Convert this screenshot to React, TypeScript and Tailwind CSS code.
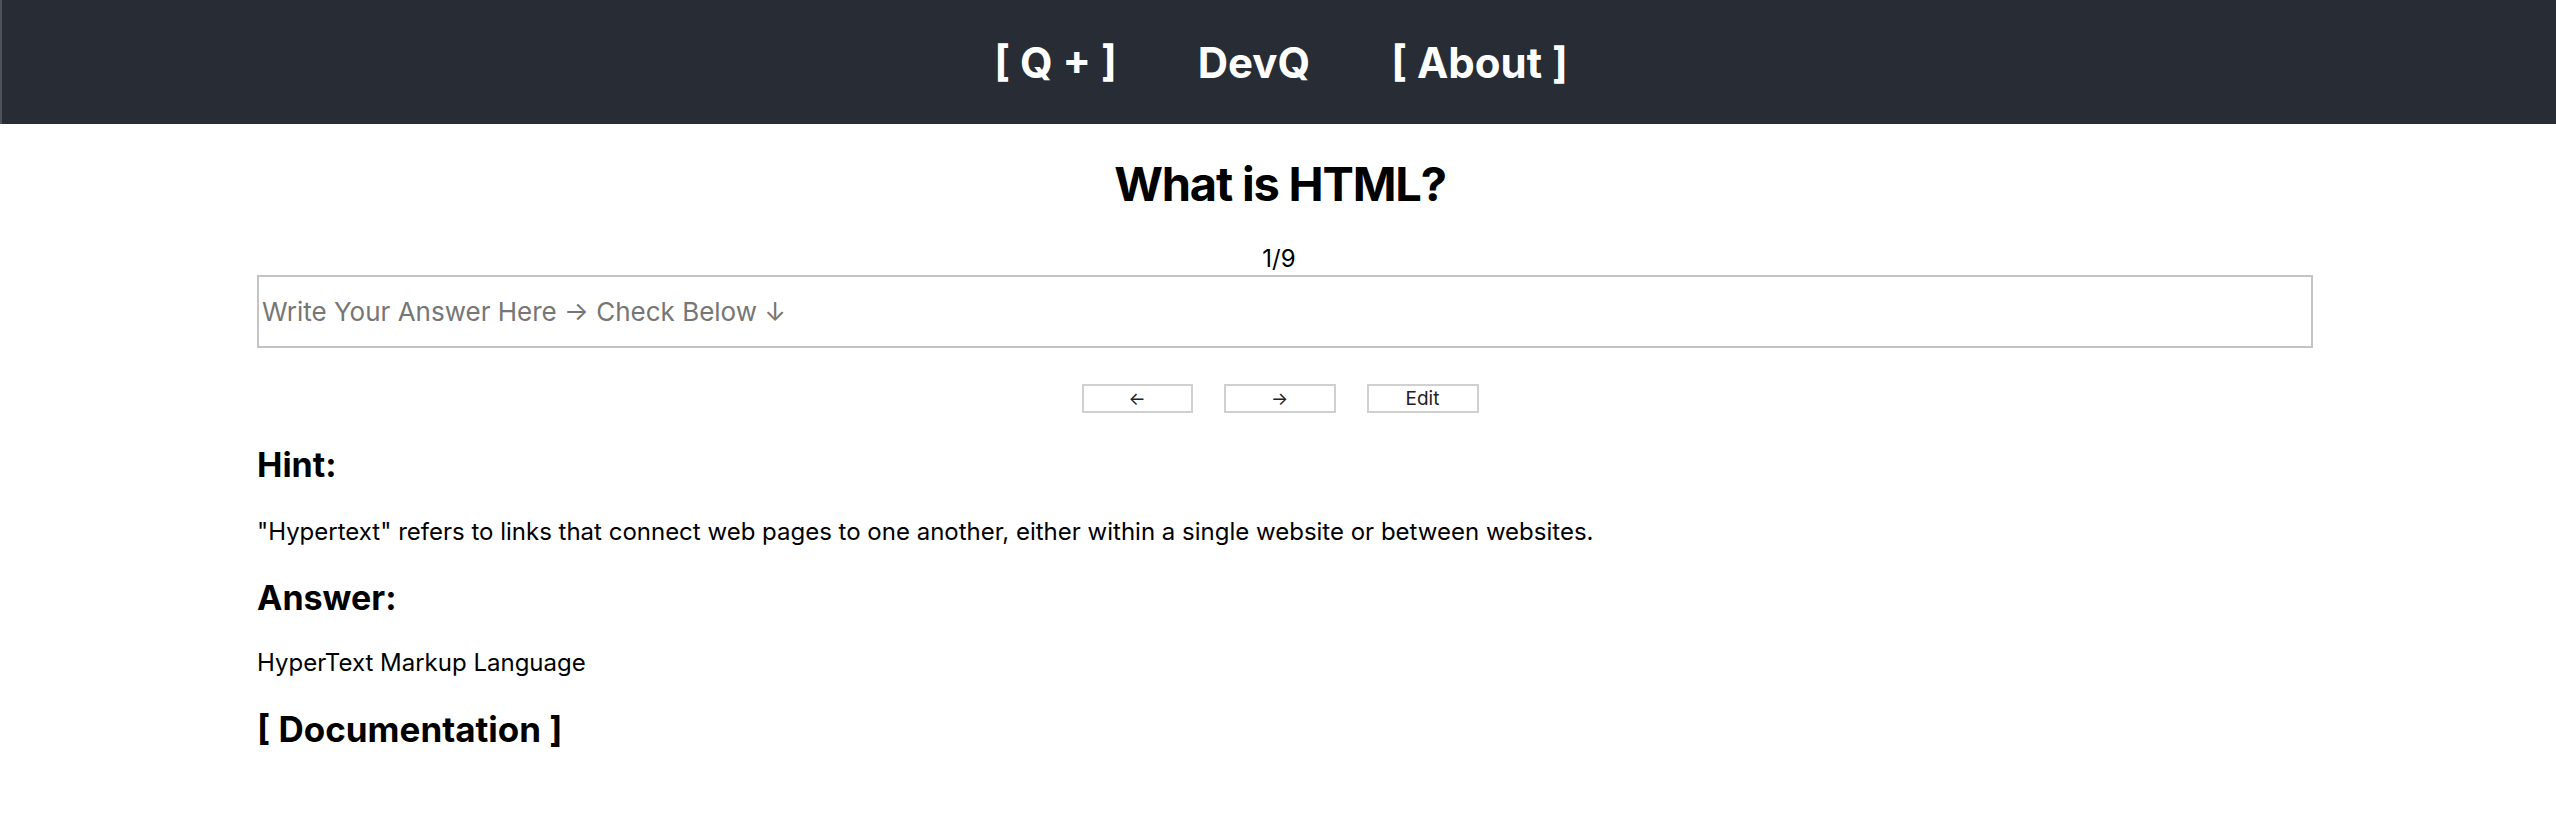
import React, { useState } from 'react'

const questions = [
  {
    q: 'What is HTML?',
    hint: '"Hypertext" refers to links that connect web pages to one another, either within a single website or between websites.',
    answer: 'HyperText Markup Language',
  },
]

export default function App() {
  const [index] = useState(0)
  const [value, setValue] = useState('')
  const item = questions[index]

  return (
    <div className="min-h-screen bg-white text-black font-['Inter',sans-serif]">
      <header className="h-[124px] bg-[#282c34] border-l-2 border-[#4e525a] pt-[42px]">
        <nav className="flex justify-center gap-[81px] pl-[4px] text-[42px] leading-none font-bold text-white">
          <a>[ Q + ]</a>
          <a>DevQ</a>
          <a>[ About ]</a>
        </nav>
      </header>

      <main className="flex flex-col">
        <h1 className="mt-[36px] pl-[4px] text-center text-[47px] leading-none font-bold tracking-[-0.025em]">
          {item.q}
        </h1>
        <div className="mt-[40px] pl-[2px] text-center text-[24px] leading-none">
          {index + 1}/9
        </div>

        <div className="mt-[4px] pl-[257px]">
          <input
            value={value}
            onChange={e => setValue(e.target.value)}
            placeholder="Write Your Answer Here → Check Below ↓"
            className="block w-[2056px] h-[73px] border-2 border-[#c4c4c4] px-[3px] text-[26px] text-black placeholder:text-[#767676] outline-none"
          />
        </div>

        <div className="mt-[36px] flex justify-center gap-[31px] pl-[4px]">
          <button className="w-[111px] h-[29px] border-2 border-[#d0d0d0] bg-white text-[18px] leading-none text-[#222]">
            ←
          </button>
          <button className="w-[112px] h-[29px] border-2 border-[#d0d0d0] bg-white text-[18px] leading-none text-[#222]">
            →
          </button>
          <button className="w-[112px] h-[29px] border-2 border-[#d0d0d0] bg-white text-[19px] leading-none text-[#222]">
            Edit
          </button>
        </div>

        <section className="pl-[257px]">
          <h2 className="mt-[35px] text-[34px] leading-none font-bold">Hint:</h2>
          <p className="mt-[38px] text-[24px] leading-none">{item.hint}</p>
          <h2 className="mt-[37px] text-[34px] leading-none font-bold">Answer:</h2>
          <p className="mt-[36px] text-[24px] leading-none">{item.answer}</p>
          <h2 className="mt-[37px] text-[35px] leading-none font-bold">[ Documentation ]</h2>
        </section>
      </main>
    </div>
  )
}
